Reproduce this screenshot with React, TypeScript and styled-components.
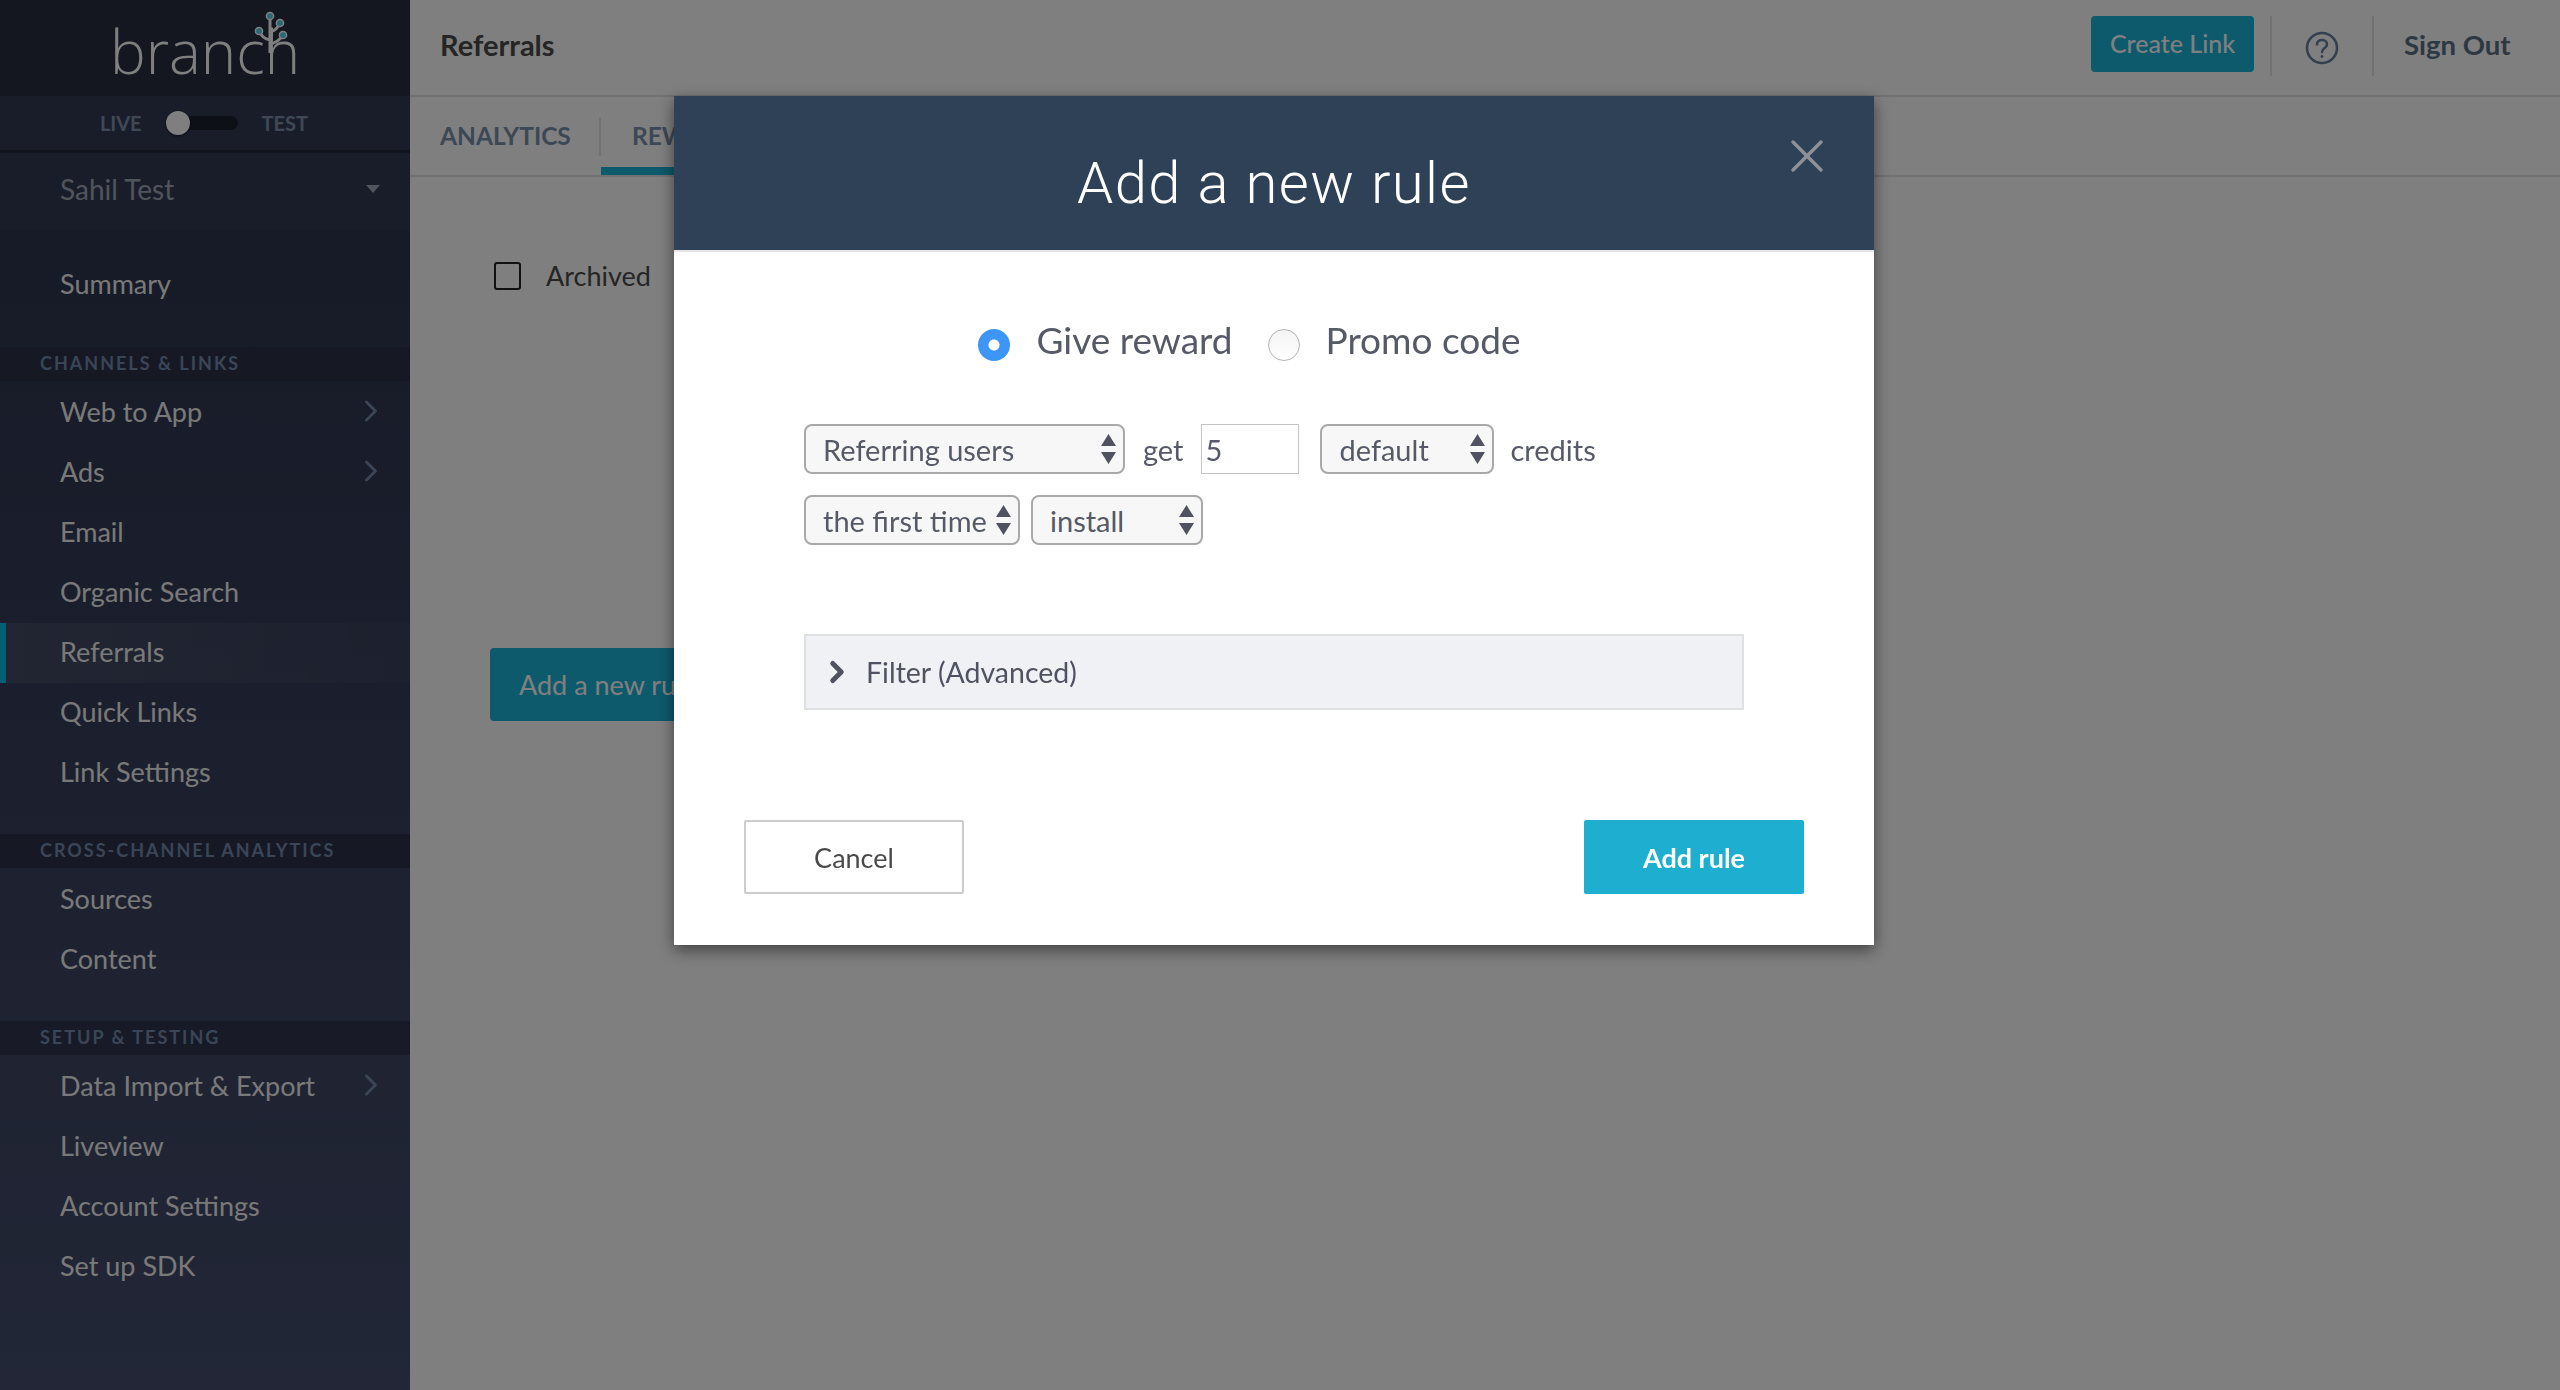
import React, { FC } from 'react';
import styled, { createGlobalStyle } from 'styled-components';
import { ChevronRight, X } from 'lucide-react';

const GlobalStyle = createGlobalStyle`
  html, body {
    margin: 0;
    padding: 0;
    height: 100%;
    background: #fff;
    font-family: "Lato", "Noto Sans", sans-serif;
    overflow: hidden;
  }
  * { box-sizing: border-box; }
`;

const Page = styled.div`
  display: flex;
  width: 2560px;
  height: 1390px;
`;

// sidebar
const Sidebar = styled.aside`
  width: 410px;
  flex: none;
  display: flex;
  flex-direction: column;
  background: linear-gradient(#2a3048, #444d6d);
  color: #fff;
`;

const LogoBar = styled.div`
  height: 96px;
  background: #282d40;
  display: flex;
  justify-content: center;
`;

const Logo = styled.div`
  position: relative;
  width: 190px;
  height: 96px;
  padding: 12px 0 0 0;
  font-family: "Open Sans", sans-serif;
  font-weight: 300;
  font-size: 60px;
  line-height: 78px;
  color: #fff;
`;

const LogoTree = styled.svg`
  position: absolute;
  left: 140px;
  top: 8px;
`;

const ModeBar = styled.div`
  height: 57px;
  background: #333b55;
  border-bottom: 3px solid #262b3d;
  display: flex;
  align-items: center;
  justify-content: center;
  gap: 24px;
  padding-right: 2px;
  font-size: 20px;
  font-weight: 700;
  color: #7e93ad;
`;

const Toggle = styled.div`
  position: relative;
  width: 72px;
  height: 14px;
  border-radius: 7px;
  background: #1d2130;
`;

const ToggleKnob = styled.span`
  position: absolute;
  left: 0;
  top: -5px;
  width: 24px;
  height: 24px;
  border-radius: 50%;
  background: #fff;
  box-shadow: 0 1px 3px rgba(0, 0, 0, 0.6);
`;

const AccountRow = styled.div`
  height: 77px;
  background: #323a54;
  padding: 0 30px 5px 60px;
  display: flex;
  align-items: center;
  justify-content: space-between;
  font-size: 28px;
  color: #a1a9b8;
`;

const Caret = styled.span`
  width: 0;
  height: 0;
  border-left: 7px solid transparent;
  border-right: 7px solid transparent;
  border-top: 8px solid #a1a9b8;
`;

const SummaryGroup = styled.div`
  padding: 25px 0 32px;
`;

const NavRow = styled.div<{ $active?: boolean }>`
  height: 60px;
  padding: 0 21px 4px ${p => (p.$active ? 54 : 60)}px;
  display: flex;
  align-items: center;
  justify-content: space-between;
  font-size: 27px;
  color: #f3f3f3;
  background: ${p =>
    p.$active
      ? 'linear-gradient(to right, rgba(255, 255, 255, 0.07), rgba(255, 255, 255, 0.02))'
      : 'transparent'};
  border-left: ${p => (p.$active ? '6px solid #00bfef' : 'none')};
`;

const SectionTitle = styled.div<{ $shade: number }>`
  height: 34px;
  padding: 0 0 2px 40px;
  display: flex;
  align-items: center;
  font-size: 18px;
  font-weight: 700;
  letter-spacing: 2px;
  color: #748cae;
  background: rgba(0, 0, 0, ${p => p.$shade});
`;

const NavGroup = styled.div`
  padding: 2px 0 31px;
`;

// main column
const Main = styled.main`
  flex: 1;
  display: flex;
  flex-direction: column;
  background: #fff;
`;

const TopBar = styled.header`
  height: 97px;
  padding: 0 50px 0 30px;
  display: flex;
  align-items: center;
  border-bottom: 2px solid #dfe3e8;
`;

const PageTitle = styled.h1`
  flex: 1;
  margin: 0 0 6px;
  font-size: 29px;
  font-weight: 700;
  color: #4a4a4a;
`;

const CreateButton = styled.button`
  width: 163px;
  height: 56px;
  margin: 0 -2px 7px 2px;
  padding: 0 0 3px;
  border: none;
  border-radius: 4px;
  background: #1bb4d8;
  color: #fff;
  font-family: inherit;
  font-size: 25px;
  font-weight: 500;
`;

const BarDivider = styled.div`
  width: 2px;
  height: 60px;
  margin: 0 18px 3px;
  background: #dfe3e8;
`;

const HelpSlot = styled.div`
  width: 64px;
  display: flex;
  justify-content: center;
`;

const SignOut = styled.div`
  width: 106px;
  margin: 0 0 6px 12px;
  white-space: nowrap;
  font-size: 27.5px;
  font-weight: 700;
  color: #5c7087;
`;

const TabBar = styled.nav`
  height: 80px;
  padding-left: 30px;
  display: flex;
  border-bottom: 2px solid #dfe3e8;
`;

const Tab = styled.div<{ $active?: boolean }>`
  width: ${p => (p.$active ? 'auto' : '159px')};
  display: flex;
  align-items: center;
  padding: ${p => (p.$active ? '6px 31px 0' : '6px 0 0')};
  font-size: 24.5px;
  font-weight: 700;
  color: #7a90ab;
  border-bottom: 8px solid ${p => (p.$active ? '#1bb4d8' : 'transparent')};
`;

const TabDivider = styled.div`
  width: 2px;
  height: 38px;
  margin-top: 21px;
  background: #dfe3e8;
`;

const Content = styled.div`
  padding: 82px 50px 0 84px;
`;

const ArchivedRow = styled.label`
  display: flex;
  align-items: center;
  gap: 25px;
  font-size: 27px;
  color: #4a4a4a;
`;

const CheckBox = styled.span`
  width: 27px;
  height: 28px;
  border: 2px solid #222;
  border-radius: 3px;
  background: #fff;
`;

const NewRuleButton = styled.button`
  display: block;
  margin: 356px 0 0 -4px;
  width: 300px;
  height: 73px;
  padding-left: 29px;
  text-align: left;
  border: none;
  border-radius: 4px;
  background: #1bb4d8;
  color: #fff;
  font-family: inherit;
  font-size: 27px;
`;

// modal
const Overlay = styled.div`
  position: fixed;
  inset: 0;
  padding: 96px 0 0 674px;
  background: rgba(0, 0, 0, 0.5);
`;

const Modal = styled.section`
  width: 1200px;
  height: 849px;
  background: #fff;
  display: flex;
  flex-direction: column;
  box-shadow: 0 5px 15px rgba(0, 0, 0, 0.5);
`;

const ModalHeader = styled.div`
  position: relative;
  height: 156px;
  flex: none;
  display: flex;
  align-items: center;
  justify-content: center;
  background: #2f4156;
  border-bottom: 2px solid #e5e5e5;
`;

const ModalTitle = styled.h2`
  margin: 20px 0 0;
  font-family: "Roboto", sans-serif;
  font-size: 58px;
  font-weight: 300;
  letter-spacing: 1.4px;
  color: #fff;
`;

const CloseButton = styled.span`
  position: absolute;
  right: 39px;
  top: 32px;
  display: flex;
  color: #8c9097;
`;

const ModalBody = styled.div`
  flex: 1;
  display: flex;
  flex-direction: column;
  padding: 0 70px;
`;

const RadioRow = styled.div`
  height: 50px;
  margin-top: 68px;
  padding-right: 49px;
  display: flex;
  align-items: center;
  justify-content: center;
`;

const RadioLabel = styled.span<{ $spaced?: boolean }>`
  margin: 0 ${p => (p.$spaced ? 35 : 0)}px 12px 26px;
  font-size: 37px;
  color: #555a66;
`;

const RadioOn = styled.span`
  width: 32px;
  height: 32px;
  flex: none;
  border-radius: 50%;
  background: radial-gradient(circle, #fff 0 5px, #3d96f5 6px);
`;

const RadioOff = styled.span`
  width: 32px;
  height: 32px;
  flex: none;
  border-radius: 50%;
  border: 1px solid #b5b5b5;
  background: linear-gradient(#f4f4f4, #fff);
`;

const RulesArea = styled.div`
  margin: 54px 0 0 60px;
  display: flex;
  flex-direction: column;
  gap: 21px;
`;

const RuleLine = styled.div`
  height: 50px;
  display: flex;
  align-items: center;
  font-size: 29px;
  color: #555a66;
`;

const SelectBox = styled.div<{ $width: number; $gap?: number }>`
  width: ${p => p.$width}px;
  height: 50px;
  margin-right: ${p => p.$gap ?? 0}px;
  padding: 0 7px 0 17px;
  flex: none;
  display: flex;
  align-items: center;
  justify-content: space-between;
  white-space: nowrap;
  border: 2px solid #a9a9a9;
  border-radius: 8px;
  background: #f7f7f7;
`;

const Word = styled.span<{ $gap?: number }>`
  margin-right: ${p => p.$gap ?? 0}px;
`;

const CreditInput = styled.div`
  width: 98px;
  height: 50px;
  margin-right: 21px;
  padding-left: 3px;
  display: flex;
  align-items: center;
  border: 1px solid #c4c4c4;
`;

const FilterBar = styled.div`
  height: 76px;
  margin: 89px 60px 0;
  padding-left: 14px;
  display: flex;
  align-items: center;
  gap: 12px;
  border: 2px solid #dfe0e3;
  background: #f0f1f5;
  font-size: 28.5px;
  color: #4f5260;
`;

const ModalActions = styled.div`
  margin-top: 110px;
  display: flex;
  justify-content: space-between;
`;

const CancelButton = styled.button`
  width: 220px;
  height: 74px;
  border: 2px solid #ccc;
  border-radius: 2px;
  background: #fff;
  color: #4a4a4a;
  font-family: inherit;
  font-size: 27px;
`;

const AddButton = styled.button`
  width: 220px;
  height: 74px;
  border: none;
  border-radius: 2px;
  background: #1eaecf;
  color: #fff;
  font-family: inherit;
  font-size: 27px;
  font-weight: 700;
`;

const SelectArrows: FC = () => (
  <svg width="15" height="30" viewBox="0 0 15 30">
    <path d="M7.5 0 L15 12 H0 Z M0 18 H15 L7.5 30 Z" fill="#50535f" />
  </svg>
);

const HelpIcon: FC = () => (
  <svg width="34" height="34" viewBox="0 0 34 34" fill="none" stroke="#68809b" strokeWidth="2.6">
    <circle cx="17" cy="17" r="15" />
    <path d="M12 13.5 C12 7.5 22 7.5 22 13.5 C22 17 17 17 17 21" strokeLinecap="round" />
    <circle cx="17" cy="25.5" r="1.4" fill="#68809b" stroke="none" />
  </svg>
);

type NavItem = { label: string; arrow?: boolean; active?: boolean };

const channels: NavItem[] = [
  { label: 'Web to App', arrow: true },
  { label: 'Ads', arrow: true },
  { label: 'Email' },
  { label: 'Organic Search' },
  { label: 'Referrals', active: true },
  { label: 'Quick Links' },
  { label: 'Link Settings' },
];
const analytics: NavItem[] = [{ label: 'Sources' }, { label: 'Content' }];
const setup: NavItem[] = [
  { label: 'Data Import & Export', arrow: true },
  { label: 'Liveview' },
  { label: 'Account Settings' },
  { label: 'Set up SDK' },
];

const NavList: FC<{ items: NavItem[] }> = ({ items }) => (
  <NavGroup>
    {items.map(item => (
      <NavRow key={item.label} $active={item.active}>
        {item.label}
        {item.arrow && <ChevronRight size={36} strokeWidth={2} color="#748aaa" />}
      </NavRow>
    ))}
  </NavGroup>
);

const App: FC = () => {
  return (
    <>
      <GlobalStyle />
      <Page>
        <Sidebar>
          <LogoBar>
            <Logo>
              branch
              <LogoTree width="44" height="50" viewBox="0 0 44 50" fill="none">
                <path
                  d="M20 8 V45 M20 24 C24 23 28 20 30 15 M20 32 C15 31 11 28 9 23 M20 36 C25 35 30 32 33 27"
                  stroke="#fff"
                  strokeWidth="3"
                />
                <g fill="#4fd0ef" stroke="#fff" strokeWidth="1.5">
                  <circle cx="20" cy="8" r="3.6" />
                  <circle cx="30" cy="15" r="3.6" />
                  <circle cx="9" cy="23" r="3.6" />
                  <circle cx="33" cy="27" r="3.6" />
                </g>
              </LogoTree>
            </Logo>
          </LogoBar>
          <ModeBar>
            <span>LIVE</span>
            <Toggle>
              <ToggleKnob />
            </Toggle>
            <span>TEST</span>
          </ModeBar>
          <AccountRow>
            Sahil Test
            <Caret />
          </AccountRow>
          <SummaryGroup>
            <NavRow>Summary</NavRow>
          </SummaryGroup>
          <SectionTitle $shade={0.1}>CHANNELS &amp; LINKS</SectionTitle>
          <NavList items={channels} />
          <SectionTitle $shade={0.22}>CROSS-CHANNEL ANALYTICS</SectionTitle>
          <NavList items={analytics} />
          <SectionTitle $shade={0.22}>SETUP &amp; TESTING</SectionTitle>
          <NavList items={setup} />
        </Sidebar>
        <Main>
          <TopBar>
            <PageTitle>Referrals</PageTitle>
            <CreateButton>Create Link</CreateButton>
            <BarDivider />
            <HelpSlot>
              <HelpIcon />
            </HelpSlot>
            <BarDivider />
            <SignOut>Sign Out</SignOut>
          </TopBar>
          <TabBar>
            <Tab>ANALYTICS</Tab>
            <TabDivider />
            <Tab $active>REWARDS</Tab>
          </TabBar>
          <Content>
            <ArchivedRow>
              <CheckBox />
              Archived
            </ArchivedRow>
            <NewRuleButton>Add a new rule</NewRuleButton>
          </Content>
        </Main>
      </Page>
      <Overlay>
        <Modal>
          <ModalHeader>
            <ModalTitle>Add a new rule</ModalTitle>
            <CloseButton>
              <X size={56} strokeWidth={1.5} />
            </CloseButton>
          </ModalHeader>
          <ModalBody>
            <RadioRow>
              <RadioOn />
              <RadioLabel $spaced>Give reward</RadioLabel>
              <RadioOff />
              <RadioLabel>Promo code</RadioLabel>
            </RadioRow>
            <RulesArea>
              <RuleLine>
                <SelectBox $width={321} $gap={18}>
                  Referring users
                  <SelectArrows />
                </SelectBox>
                <Word $gap={18}>get</Word>
                <CreditInput>5</CreditInput>
                <SelectBox $width={174} $gap={16}>
                  default
                  <SelectArrows />
                </SelectBox>
                <Word>credits</Word>
              </RuleLine>
              <RuleLine>
                <SelectBox $width={216} $gap={11}>
                  the first time
                  <SelectArrows />
                </SelectBox>
                <SelectBox $width={172}>
                  install
                  <SelectArrows />
                </SelectBox>
              </RuleLine>
            </RulesArea>
            <FilterBar>
              <ChevronRight size={34} strokeWidth={3.5} />
              Filter (Advanced)
            </FilterBar>
            <ModalActions>
              <CancelButton>Cancel</CancelButton>
              <AddButton>Add rule</AddButton>
            </ModalActions>
          </ModalBody>
        </Modal>
      </Overlay>
    </>
  );
};

export default App;
